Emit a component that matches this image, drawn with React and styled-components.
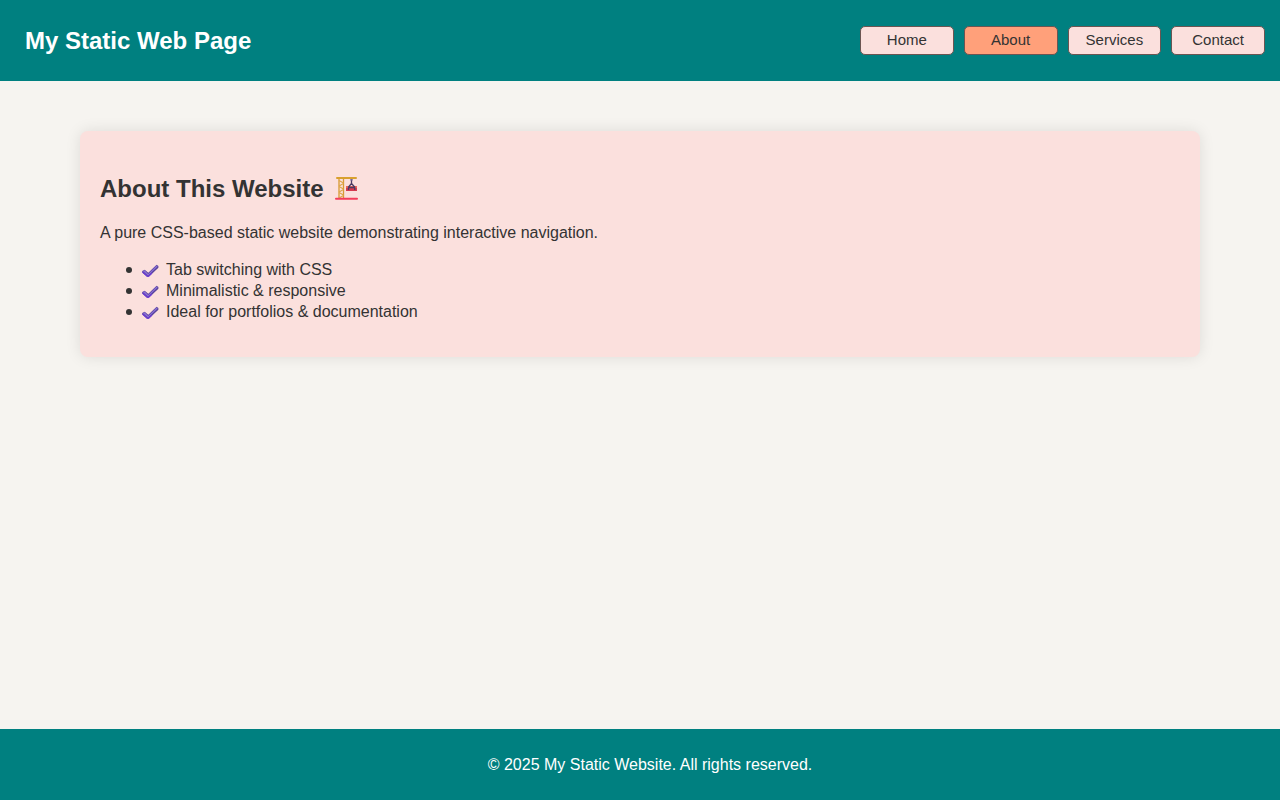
import React from "react";
import styled, { createGlobalStyle } from "styled-components";

const GlobalStyle = createGlobalStyle`
  * { box-sizing: border-box; }
  body {
    margin: 0;
    background: #f6f4f0;
    color: #333;
    font-family: "Liberation Sans", Arial, sans-serif;
    font-size: 16px;
    line-height: 18px;
  }
`;

const Page = styled.div`
  min-height: 100vh;
  display: flex;
  flex-direction: column;
`;

const Header = styled.header`
  display: flex;
  align-items: center;
  justify-content: space-between;
  flex-wrap: wrap;
  gap: 10px;
  min-height: 81px;
  padding: 15px 15px 15px 25px;
  background: #008080;
`;

const SiteTitle = styled.h1`
  margin: 0;
  color: #fff;
  font-size: 24px;
  line-height: 28px;
`;

const Nav = styled.nav`
  display: grid;
  grid-template-columns: repeat(4, 1fr);
  gap: 10px;
  width: 405px;
`;

const NavButton = styled.button`
  height: 29px;
  padding: 0 0 1px;
  border: 1px solid #6b5552;
  border-radius: 5px;
  background: ${({ $active }) => ($active ? "#ffa07a" : "#fbe0dd")};
  color: #333;
  font: inherit;
  font-size: 15px;
  cursor: pointer;
`;

const Main = styled.main`
  flex: 1;
  padding: 50px 80px;
`;

const Card = styled.section`
  padding: 44px 20px 35px;
  border-radius: 8px;
  background: #fbe0dd;
  box-shadow: 0 0 15px rgba(0, 0, 0, 0.1);
`;

const CardTitle = styled.h2`
  display: flex;
  align-items: center;
  gap: 10px;
  margin: 0 0 21px;
  font-size: 24px;
  line-height: 28px;
`;

const Text = styled.p`
  margin: 0 0 17px;
`;

const FeatureList = styled.ul`
  margin: 0;
  padding: 0 0 0 26px;
  line-height: 21px;
  list-style: none;
`;

const Feature = styled.li`
  display: flex;
  align-items: center;

  &::before {
    content: "";
    width: 6px;
    height: 6px;
    margin-right: 9px;
    border-radius: 50%;
    background: #333;
  }
`;

const CheckIcon = styled.svg`
  flex: none;
  width: 20px;
  height: 16px;
  margin: 2px 5px 0 0;
`;

const Footer = styled.footer`
  padding: 27px 10px 26px 30px;
  background: #008080;
  color: #fff;
  text-align: center;
`;

function Crane() {
  return (
    <svg width="26" height="26" viewBox="0 0 26 26" aria-hidden="true">
      <path d="M5 3V22M9.5 3V22" stroke="#d79a35" strokeWidth="1.3" />
      <path d="M5 4.5L9.5 7M9.5 7.5L5 10M5 10.5L9.5 13M9.5 13.5L5 16M5 16.5L9.5 19M9.5 19.5L5 22" fill="none" stroke="#dda747" strokeWidth="1.1" />
      <rect x="2" y="1" width="21" height="2" rx="1" fill="#d9a02e" />
      <rect x="1" y="21.8" width="23" height="2" rx="1" fill="#f33c5b" />
      <rect x="12" y="10" width="11" height="2" fill="#ed6857" />
      <rect x="12" y="12" width="11" height="3" fill="#d33a50" />
      <path d="M17.5 3V8M17.5 7.5L14.5 11V14M17.5 7.5L20.7 11V14M15 11.5H20" fill="none" stroke="#4b3b64" strokeWidth="1.3" />
      <rect x="16.4" y="3" width="2.2" height="1.6" fill="#76699a" />
    </svg>
  );
}

function Check() {
  return (
    <CheckIcon viewBox="0 0 20 16" aria-hidden="true">
      <path d="M1.2 8L3.7 6.8L7.3 9.8L15.6 1.8L17.4 3V4.7L7.8 13.8H6L1.2 9.6Z" fill="#59449b" />
      <path d="M1.8 8L3.7 7.3L7.2 10.9L15.6 2.6L16.6 3.6L7 12.8Z" fill="#8a6fd6" />
      <path d="M1.6 9.1L6.2 13.2H7.6L11 10.1" fill="none" stroke="#6c37dc" strokeWidth="1.1" />
    </CheckIcon>
  );
}

const tabs = ["Home", "About", "Services", "Contact"];
const features = [
  "Tab switching with CSS",
  "Minimalistic & responsive",
  "Ideal for portfolios & documentation",
];

export default function App() {
  return (
    <Page>
      <GlobalStyle />
      <Header>
        <SiteTitle>My Static Web Page</SiteTitle>
        <Nav aria-label="Main">
          {tabs.map((tab) => (
            <NavButton
              key={tab}
              type="button"
              $active={tab === "About"}
              aria-current={tab === "About" ? "page" : undefined}
            >
              {tab}
            </NavButton>
          ))}
        </Nav>
      </Header>
      <Main>
        <Card>
          <CardTitle>
            About This Website <Crane />
          </CardTitle>
          <Text>A pure CSS-based static website demonstrating interactive navigation.</Text>
          <FeatureList>
            {features.map((feature) => (
              <Feature key={feature}>
                <Check />
                {feature}
              </Feature>
            ))}
          </FeatureList>
        </Card>
      </Main>
      <Footer>© 2025 My Static Website. All rights reserved.</Footer>
    </Page>
  );
}
